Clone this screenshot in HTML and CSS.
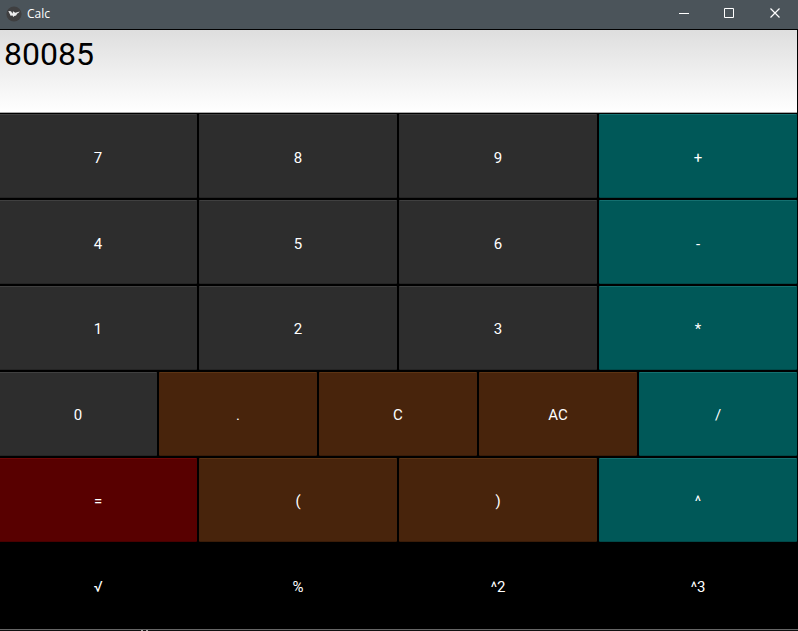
FILE: index.html
```html
<!DOCTYPE html>
<html lang="en">
<head>
<meta charset="utf-8">
<title>Calc</title>
<link rel="stylesheet" href="styles.css">
</head>
<body>
<header class="titlebar">
  <svg class="logo" width="16" height="16" viewBox="0 0 16 16"><circle cx="8" cy="8" r="7.6" fill="#3f3f40"/><path d="M2.3 5l2.7.2 1.6 2.6L7 5.2l2.2 1.6 4.6-1.4-1.5 1.5-1 .7-1.2 1.8-1.8.5L7.4 11 6.2 9.3 4.8 10z" fill="#eee"/></svg>
  <span class="title">Calc</span>
  <div class="controls">
    <svg width="45" height="28" viewBox="0 0 45 28"><path d="M18 13.5h10" stroke="#fff"/></svg>
    <svg width="46" height="28" viewBox="0 0 46 28"><path d="M18.5 8.5h9v9h-9z" fill="none" stroke="#fff"/></svg>
    <svg width="46" height="28" viewBox="0 0 46 28"><path d="M18.5 8.5l9 9M27.5 8.5l-9 9" stroke="#fff" stroke-width="1.2"/></svg>
  </div>
</header>
<main class="calc">
  <div class="display">80085</div>
  <div class="row low"><button class="key">7</button><button class="key">8</button><button class="key">9</button><button class="key teal">+</button></div>
  <div class="row low"><button class="key">4</button><button class="key">5</button><button class="key">6</button><button class="key teal">-</button></div>
  <div class="row"><button class="key">1</button><button class="key">2</button><button class="key">3</button><button class="key teal">*</button></div>
  <div class="row"><button class="key">0</button><button class="key brown">.</button><button class="key brown">C</button><button class="key brown">AC</button><button class="key teal">/</button></div>
  <div class="row"><button class="key red">=</button><button class="key brown">(</button><button class="key brown">)</button><button class="key teal">^</button></div>
  <div class="row"><button class="key black">√</button><button class="key black">%</button><button class="key black">^2</button><button class="key black">^3</button></div>
</main>
<footer class="edge"><i class="speck"></i><i class="speck"></i></footer>
</body>
</html>
```
FILE: styles.css
```css
* { box-sizing: border-box; }
body { margin: 0; width: 798px; height: 631px; overflow: hidden; background: #000; color: #fff; font-family: Roboto, sans-serif; }
.titlebar { display: flex; align-items: center; height: 29px; padding: 0 0 2px 6px; background: #4b545a; }
.title { margin: 1px 0 0 5px; font: 12px/16px "Open Sans", sans-serif; }
.controls { display: flex; margin-left: auto; }
.calc { display: grid; grid-template-rows: 84px repeat(6, 86px); width: 800px; margin-left: -2px; }
.display { margin: 1px 1px 0 2px; padding: 5px 4px; background: linear-gradient(#dedede, #fff); border-bottom: 1px solid #aaa; color: #000; font-size: 32px; line-height: 38px; }
.row { display: flex; }
.key { flex: 1 1 0; margin: 1px; padding: 2px 0 0; border: 0; border-top: 1px solid #404040; border-bottom: 1px solid #242424; border-radius: 1px; background: #2d2d2d; color: #fff; font: 15px/18px Roboto, sans-serif; }
.low .key { padding-top: 4px; }
.teal { background: #005858; border-color: #147070 transparent #004848; }
.brown { background: #48240c; border-color: #5c3414 transparent #3a1c08; }
.red { background: #580000; border-color: #700808 transparent #480000; }
.black { background: #000; border-color: #000; }
.edge { display: flex; gap: 3px; height: 2px; padding-left: 141px; border-top: 1px solid #666; background: #111; }
.speck { width: 2px; height: 1px; background: #a8a8a8; }
```
